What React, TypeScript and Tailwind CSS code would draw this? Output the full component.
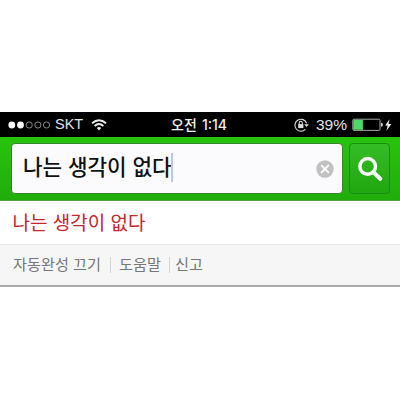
const links = [
  { label: '자동완성 끄기', style: 'w-[97px]' },
  { label: '도움말', style: 'w-[51px] border-l border-[#d3d5da] pl-[8px]' },
  { label: '신고', style: 'border-l border-[#d3d5da] pl-[5px] ml-[8px]' },
];

function StatusBar() {
  return (
    <div className="flex h-[25px] items-center bg-black text-[14.5px] leading-none text-[#e4e4e4]">
      <div className="flex w-[163px] items-center pl-2">
        <svg width="43" height="10" viewBox="0 0 43 10" className="shrink-0">
          <circle cx="3.8" cy="5" r="3.4" fill="#fff" />
          <circle cx="12.5" cy="5" r="3.4" fill="#fff" />
          {[21.2, 29.9, 38.5].map(cx => (
            <circle key={cx} cx={cx} cy="5" r="3.1" fill="none" stroke="#aaa" strokeWidth="0.8" />
          ))}
        </svg>
        <span className="ml-1 w-[28px] whitespace-nowrap">SKT</span>
        <svg width="16" height="12" viewBox="0 0 16 12" className="ml-2" fill="none" stroke="#eee" strokeWidth="1.9">
          <path d="M1 4.3Q8-1.7 15 4.3" />
          <path d="M3.6 7Q8 3.2 12.4 7" />
          <path d="M5.8 9Q8 7.2 10.2 9L8 11.4Z" fill="#eee" stroke="none" />
        </svg>
      </div>
      <div className="flex flex-1 items-center whitespace-nowrap pl-2 text-[14px] font-medium text-[#f0f0f0]">
        <span className="w-[31px]">오전</span>
        <span className="font-['Inter']">1:14</span>
      </div>
      <div className="flex w-[106px] items-center">
        <svg width="15" height="14" viewBox="0 0 15 14" fill="none" stroke="#ddd" strokeWidth="1.1">
          <path d="M11.4 11.3A6 6 0 1 1 12.6 5.2" />
          <path d="M10.2 6.2h4.7l-2.4 2.9z" fill="#ddd" stroke="none" />
          <path d="M5.2 6.3V4.9a1.6 1.6 0 0 1 3.2 0v1.4" />
          <rect x="4.2" y="6.1" width="5.2" height="4" fill="#ddd" stroke="none" />
        </svg>
        <span className="ml-[7px] w-[32px] text-[15.5px]">39%</span>
        <svg width="40" height="14" viewBox="0 0 40 14" className="ml-[4px]">
          <rect x="0.8" y="1.2" width="27.2" height="11.2" rx="1.2" fill="none" stroke="#a5a5a5" />
          <rect x="1.3" y="1.8" width="9.6" height="10" fill="#50d868" />
          <path d="M29 4.8a2 2 0 0 1 0 4z" fill="#ccc" />
          <path d="M37.5 1.2 33.2 7.6h2.5l-1.3 5.2 5-6.8h-2.9z" fill="#f4f4f4" />
        </svg>
      </div>
    </div>
  );
}

function SearchBar() {
  return (
    <div className="flex h-[64px] items-start gap-[6px] border-b border-[#579c3f] bg-linear-to-b from-[#28c40d] to-[#20ad0b] pt-[6px] pl-[11px]">
      <div className="flex h-[51px] w-[332px] items-center rounded-[4px] border border-[#35842a] bg-[#fbfbfd] pl-[11px]">
        <span className="whitespace-nowrap pt-px text-[21.3px] font-medium leading-none tracking-[-0.05px] text-[#111]">나는 생각이 없다</span>
        <span className="-ml-px h-[29px] w-[2px] -translate-y-px bg-[#bcc5ec]" />
        <svg width="18" height="18" viewBox="0 0 18 18" className="mr-[8px] ml-auto">
          <circle cx="9" cy="9" r="8.7" fill="#c1c1c1" />
          <path d="m5.2 5.2 7.6 7.6m0-7.6-7.6 7.6" stroke="#fff" strokeWidth="1.8" />
        </svg>
      </div>
      <button className="flex h-[51px] w-[41px] items-center justify-center rounded-[4px] border border-[#188f12] bg-linear-to-b from-[#35bd25] to-[#20a70e]">
        <svg width="26" height="26" viewBox="0 0 26 26" fill="none" stroke="#fbfff9">
          <circle cx="10.7" cy="10.4" r="7.8" strokeWidth="3.5" />
          <path d="m16.2 16 7 6.8" strokeWidth="4" strokeLinecap="round" />
        </svg>
      </button>
    </div>
  );
}

export default function App() {
  return (
    <div className="h-[400px] w-[400px] overflow-hidden bg-white pt-[112px] font-['Liberation_Sans','Noto_Sans_CJK_KR',sans-serif]">
      <StatusBar />
      <SearchBar />
      <div className="flex h-[43px] items-center pl-[12.5px] pt-px text-[19px] leading-none text-[#c3272d]">
        나는 생각이 없다
      </div>
      <div className="flex h-[43px] items-center border-t border-b-2 border-t-[#e7e7e7] border-b-[#aaa] bg-[#f6f6f6] pl-[13px] text-[15.2px] leading-[16px] text-[#777]">
        {links.map(l => (
          <span key={l.label} className={`whitespace-nowrap ${l.style}`}>{l.label}</span>
        ))}
      </div>
    </div>
  );
}
